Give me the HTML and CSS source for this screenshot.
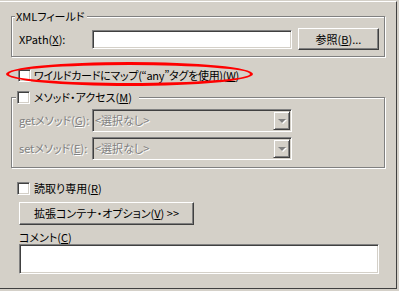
FILE: index.html
```html
<!DOCTYPE html>
<html lang="ja">
<head>
    <meta charset="UTF-8">
    <title>XMLフィールド</title>
    <link rel="stylesheet" href="styles.css">
</head>
<body>
    <div class="panel">
        <div class="group">
            <div class="group-title">XMLフィールド</div>
            <div class="field-row">
                <label class="field-label" for="xpath">XPath(<u>X</u>):</label>
                <input id="xpath" class="textbox xpath" type="text">
                <button class="button browse">参照(<u>B</u>)...</button>
            </div>
        </div>
        <label class="check-row wildcard"><input class="checkbox" type="checkbox">ワイルドカードにマップ(“any”タグを使用)(<u>W</u>)</label>
        <div class="group methods">
            <label class="group-title check-title"><input class="checkbox" type="checkbox">メソッド・アクセス(<u>M</u>)</label>
            <div class="field-row">
                <span class="field-label disabled">getメソッド(<u>G</u>):</span>
                <div class="combo">
                    <span class="combo-text disabled">&lt;選択なし&gt;</span>
                    <span class="combo-button"><span class="arrow"></span></span>
                </div>
            </div>
            <div class="field-row">
                <span class="field-label disabled">setメソッド(<u>E</u>):</span>
                <div class="combo">
                    <span class="combo-text disabled">&lt;選択なし&gt;</span>
                    <span class="combo-button"><span class="arrow"></span></span>
                </div>
            </div>
        </div>
        <label class="check-row readonly"><input class="checkbox" type="checkbox">読取り専用(<u>R</u>)</label>
        <button class="button wide">拡張コンテナ・オプション(<u>V</u>) &gt;&gt;</button>
        <div class="comment-label">コメント(<u>C</u>)</div>
        <textarea class="textbox comment"></textarea>
        <div class="annotation"></div>
    </div>
</body>
</html>
```
FILE: styles.css
```css
body {
    margin: 0;
    background-color: #d4d0c8;
    color: #000;
    font-family: "Noto Sans CJK JP", sans-serif;
    font-size: 11px;
    line-height: 13px;
    font-feature-settings: "palt";
}
.panel {
    position: relative;
    width: 397px;
    height: 288px;
    margin-top: 1px;
    box-sizing: border-box;
    border-top: 1px solid #fff;
    border-right: 1px solid #404040;
    border-bottom: 1px solid #404040;
    padding: 14px 0 0 11px;
}
.group {
    width: 374px;
    box-sizing: border-box;
    border: 1px solid #808080;
    box-shadow: inset 1px 1px #fff, 1px 1px #fff;
    padding: 0 5px 6px 7px;
}
.group-title {
    display: flex;
    align-items: center;
    width: max-content;
    height: 13px;
    margin: -7px 0 0 -4px;
    padding: 0 2px 0 1px;
    background-color: #d4d0c8;
    white-space: nowrap;
}
.check-title {
    margin-left: -3px;
    padding: 0 7px 0 1px;
}
.field-row {
    display: flex;
    align-items: center;
    height: 22px;
    margin-top: 5px;
}
.field-label {
    width: 73px;
    flex: none;
    white-space: nowrap;
}
.disabled {
    color: #808080;
    text-shadow: 1px 1px #fff;
}
.textbox {
    box-sizing: border-box;
    margin: 0;
    padding: 0 2px;
    font: inherit;
    background-color: #fff;
    border: 1px solid;
    border-color: #808080 #fff #fff #808080;
    box-shadow: inset 1px 1px #404040, inset -1px -1px #d4d0c8;
    outline: none;
}
.xpath {
    width: 200px;
    height: 19px;
}
.button {
    box-sizing: border-box;
    margin: 0;
    padding: 0;
    font: inherit;
    color: #000;
    background-color: #d4d0c8;
    border: 1px solid;
    border-color: #fff #404040 #404040 #fff;
    box-shadow: inset -1px -1px #808080;
    white-space: nowrap;
}
.browse {
    width: 81px;
    height: 22px;
    margin-left: 6px;
}
.check-row {
    display: flex;
    align-items: center;
    height: 13px;
    white-space: nowrap;
}
.checkbox {
    appearance: none;
    flex: none;
    width: 13px;
    height: 13px;
    margin: 0 4px 0 0;
    box-sizing: border-box;
    background-color: #fff;
    border: 1px solid;
    border-color: #808080 #fff #fff #808080;
    box-shadow: inset 1px 1px #404040, inset -1px -1px #d4d0c8;
}
.wildcard {
    margin: 12px 0 0 7px;
    letter-spacing: -0.3px;
}
.wildcard .checkbox {
    margin-right: 3px;
}
.methods {
    margin-top: 15px;
    padding-bottom: 7px;
}
.methods .field-row {
    height: 23px;
}
.combo {
    display: flex;
    width: 200px;
    height: 23px;
    box-sizing: border-box;
    padding: 1px;
    border: 1px solid;
    border-color: #808080 #fff #fff #808080;
    box-shadow: inset 1px 1px #404040, inset -1px -1px #d4d0c8;
}
.combo-text {
    flex: 1;
    display: flex;
    align-items: center;
    padding-left: 1px;
}
.combo-button {
    display: flex;
    align-items: center;
    justify-content: center;
    width: 17px;
    height: 19px;
    box-sizing: border-box;
    border: 1px solid;
    border-color: #d4d0c8 #404040 #404040 #d4d0c8;
    box-shadow: inset 1px 1px #fff, inset -1px -1px #808080;
}
.arrow {
    width: 0;
    height: 0;
    border-left: 4px solid transparent;
    border-right: 4px solid transparent;
    border-top: 4px solid #808080;
    filter: drop-shadow(1px 1px 0 #fff);
}
.readonly {
    margin: 14px 0 0 6px;
}
.wide {
    display: block;
    width: 175px;
    height: 23px;
    margin: 7px 0 0 8px;
}
.comment-label {
    height: 13px;
    margin: 6px 0 0 8px;
}
.comment {
    display: block;
    width: 360px;
    height: 30px;
    margin-left: 8px;
    resize: none;
}
.annotation {
    position: absolute;
    left: 6px;
    top: 60px;
    width: 247px;
    height: 24px;
    box-sizing: border-box;
    border: 3px solid #f00;
    border-radius: 50%;
}
```
